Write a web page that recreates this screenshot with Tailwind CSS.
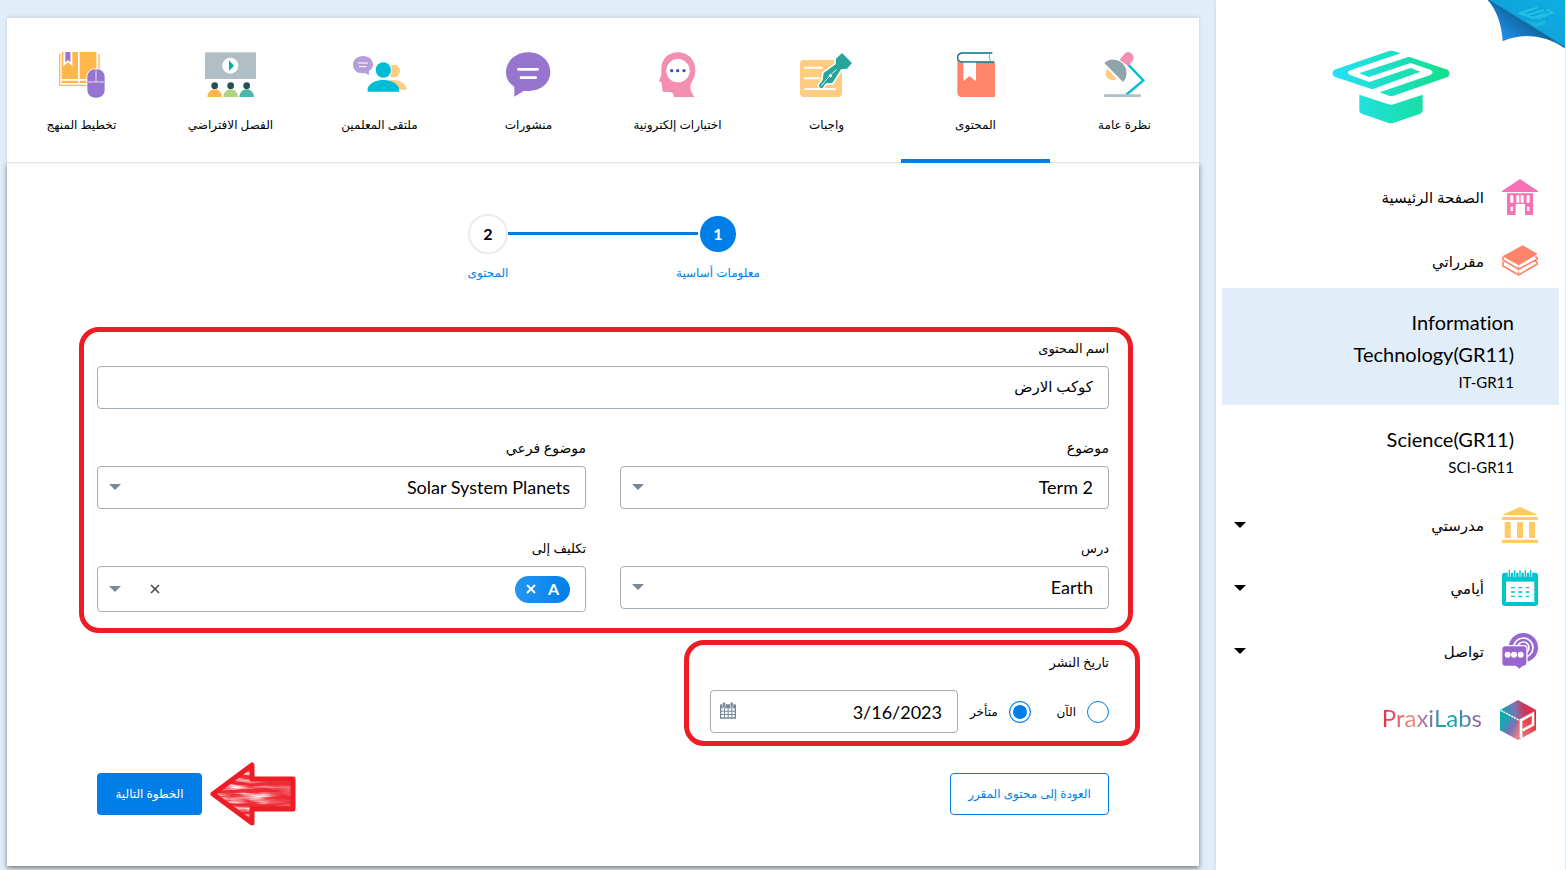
<!DOCTYPE html>
<html lang="ar" dir="rtl">
<head>
<meta charset="utf-8">
<meta name="viewport" content="width=device-width, initial-scale=1">
<title>المحتوى</title>
<script src="https://cdn.jsdelivr.net/npm/@tailwindcss/browser@4"></script>
</head>
<body class="flex min-h-screen bg-[#e1edf9] font-[Lato,'DejaVu_Sans',sans-serif] text-black [font-variant-ligatures:no-common-ligatures]">

<aside class="relative w-[350px] shrink-0 border-r border-[#e1edf9] bg-white px-1.5 shadow-[0_0_4px_rgba(0,0,0,0.12)]">
  <a href="#" aria-label="الشعار" class="mt-[50px] flex justify-center">
    <svg class="h-[74px] w-[118px]" viewBox="365 150 354 222">
      <defs><linearGradient id="cap" x1="365" x2="719" y1="0" y2="0" gradientUnits="userSpaceOnUse"><stop stop-color="#26e0f8"/><stop offset="1" stop-color="#12df8a"/></linearGradient></defs>
      <g fill="url(#cap)">
        <path d="M372 209 536 153Q543 151 550 153L571 160 420 211Q406 217 419 225L477 246 601 204 630 215 486 268 372 230Q361 220 372 209Z"/>
        <path d="M712 209 596 170 446 220 476 231 601 189 660 209Q674 217 660 225L508 277 536 287Q543 289 550 287L712 231Q724 220 712 209Z"/>
        <path d="M447 284 532 312Q542 316 552 312L637 284V332Q636 338 630 341L551 368Q542 371 533 368L454 341Q448 338 447 332Z"/>
      </g>
    </svg>
  </a>
  <a href="#" aria-label="طي الصفحة" class="absolute top-0 right-0">
    <svg class="h-12 w-[77px]" viewBox="836 0 231 144">
      <defs>
        <linearGradient id="f1" x1="0" y1="1" x2="1" y2="0"><stop stop-color="#0e6fb6"/><stop offset=".5" stop-color="#10a3dc"/><stop offset="1" stop-color="#0cb0e0"/></linearGradient>
        <linearGradient id="f2" x1="870" y1="120" x2="935" y2="40" gradientUnits="userSpaceOnUse"><stop stop-color="#2196f3"/><stop offset=".6" stop-color="#1577bd"/><stop offset="1" stop-color="#0f639f"/></linearGradient>
      </defs>
      <path d="M836 0H1067V143Z" fill="url(#f1)"/>
      <path d="M836 0Q876 50 880 124 970 84 1067 143Z" fill="url(#f2)"/>
      <path d="M836 0 1067 143" stroke="#0a5384" stroke-width="5" opacity=".6"/>
      <g fill="none" stroke="#2cc8ea" stroke-width="6" opacity=".8"><path d="M985 22 932 40 972 54 1008 40"/><path d="M1012 28 1030 38 984 56M1004 30 952 46"/></g>
      <path d="M950 60 980 70 1008 60V74L980 82Z" fill="#19b9d8"/>
    </svg>
  </a>

  <nav class="pt-[55px] text-[15px]">
    <a href="#" class="flex h-9 items-center gap-[18px] pr-[21px]">
      <svg class="size-9" viewBox="876 537 108 108"><path fill="#f971b5" d="M930 537 984 573V576H876V573ZM891 580H969V645H945V612H917V645H891Z"/><g fill="#fff"><path d="M901 586h9v22h-9zM919 586h9v22h-9zM932 586h9v22h-9zM950 586h9v22h-9zM902 620h7v13h-7zM951 620h7v13h-7z"/></g></svg>
      <span>الصفحة الرئيسية</span>
    </a>
    <a href="#" class="mt-7 flex h-9 items-center gap-[18px] pr-[21px]">
      <svg class="size-9" viewBox="876 730 108 108"><path fill="#ff8469" d="M938 737 983 763 926 797 877 770Z"/><g fill="none" stroke="#ff8469" stroke-width="5" stroke-linejoin="round"><path d="M879 771V781L926 809 983 777 976 770M976 782 983 792 926 826 879 799V786"/><path d="M926 800V808M926 816V825" stroke-width="3"/></g></svg>
      <span>مقرراتي</span>
    </a>
    <div class="mt-[9px] text-right" dir="ltr">
      <a href="#" aria-current="page" class="block bg-[#e1edf9] pt-[18px] pr-[45px] pb-[11px] pl-20"><span class="block text-xl leading-8">Information Technology(GR11)</span><span class="block text-[15px] leading-6">IT-GR11</span></a>
      <a href="#" class="block pt-[18px] pr-[45px] pb-[11px] pl-20"><span class="block text-xl leading-8">Science(GR11)</span><span class="block text-[15px] leading-6">SCI-GR11</span></a>
    </div>
    <button type="button" class="mt-[17px] flex h-9 w-full items-center gap-[18px] pr-[21px] pl-3">
      <svg class="size-9" viewBox="876 681 108 108"><path fill="#ffca62" d="M930 681 980 703V706H880V703ZM876 711H984V720H876ZM884 726H902V774H884ZM921 726H939V774H921ZM957 726H975V774H957ZM876 779H984V789H876Z"/></svg>
      <span>مدرستي</span>
      <svg class="mr-auto h-1.5 w-3" viewBox="0 0 12 6"><path d="M0 0H12L6 6Z"/></svg>
    </button>
    <button type="button" class="mt-[27px] flex h-9 w-full items-center gap-[18px] pr-[21px] pl-3">
      <svg class="size-9" viewBox="876 60 108 108"><rect x="876" y="68" width="108" height="100" rx="8" fill="#00c5ce"/><rect x="888" y="95" width="85" height="61" fill="#fff"/><path d="M898 60V80M914 60V80M930 60V80M946 60V80M962 60V80" stroke="#fff" stroke-width="9"/><path d="M898 61V81M914 61V81M930 61V81M946 61V81M962 61V81" stroke="#00c5ce" stroke-width="4" stroke-linecap="round"/><path d="M903 113H958M903 126H958M903 139H958" stroke="#00c5ce" stroke-width="4" stroke-dasharray="12 10"/></svg>
      <span>أيامي</span>
      <svg class="mr-auto h-1.5 w-3" viewBox="0 0 12 6"><path d="M0 0H12L6 6Z"/></svg>
    </button>
    <button type="button" class="mt-[27px] flex h-9 w-full items-center gap-[18px] pr-[21px] pl-3">
      <svg class="size-9" viewBox="876 249 108 108"><circle cx="940" cy="293" r="44" fill="#9966d1"/><g fill="none" stroke="#fff" stroke-width="5"><circle cx="940" cy="293" r="29"/><circle cx="940" cy="293" r="17"/></g><path d="M886 287H941Q951 287 951 297V339Q951 349 941 349H939L928 359 917 349H886Q875 349 875 339V297Q875 287 886 287Z" fill="#9966d1" stroke="#fff" stroke-width="4"/><g fill="#fff"><circle cx="893" cy="314" r="9"/><circle cx="912" cy="314" r="9"/><circle cx="932" cy="314" r="9"/></g></svg>
      <span>تواصل</span>
      <svg class="mr-auto h-1.5 w-3" viewBox="0 0 12 6"><path d="M0 0H12L6 6Z"/></svg>
    </button>
    <a href="#" class="mt-[31px] flex h-10 items-start gap-[18px] pr-[23px]">
      <svg class="h-10 w-9" viewBox="870 450 108 120">
        <defs><linearGradient id="p1" x1="0" x2="1" y1=".4" y2=".3"><stop stop-color="#00afa9"/><stop offset=".4" stop-color="#7a74b5"/><stop offset=".65" stop-color="#c83a5e"/><stop offset="1" stop-color="#ee2b38"/></linearGradient><linearGradient id="p2" x1="0" y1="0" x2=".9" y2="1"><stop stop-color="#00b3a6"/><stop offset=".35" stop-color="#1fa3b4"/><stop offset=".65" stop-color="#7c70b2"/><stop offset="1" stop-color="#df8697"/></linearGradient><linearGradient id="p3" x1="0" y1="1" x2=".8" y2="0"><stop stop-color="#e88c8c"/><stop offset=".5" stop-color="#e6545b"/><stop offset="1" stop-color="#e4202e"/></linearGradient></defs>
        <path d="M924 450 978 480 924 511 870 480Z" fill="url(#p1)"/><path d="M870 480 924 511V570L870 541Z" fill="url(#p2)"/><path d="M978 480 924 511V570L978 541Z" fill="url(#p3)"/>
        <path d="M872 481 928 511" stroke="#fff" stroke-width="4" stroke-dasharray="7 2"/><path d="M933 564V511L969 491V524L938 541" fill="none" stroke="#fff" stroke-width="8"/>
      </svg>
      <span class="bg-[linear-gradient(90deg,#e4304a,#e88c8c_32%,#8b6db0_46%,#00afa9_64%,#4a86bd_84%,#b05a8c)] bg-clip-text pt-0.5 text-2xl leading-8 text-transparent" dir="ltr">PraxiLabs</span>
    </a>
  </nav>
</aside>

<main class="min-w-0 flex-1 pt-[18px] pr-[17px] pb-1 pl-[7px]">
  <nav class="relative z-10 grid grid-cols-8 border-b border-[#dfe1e3] bg-white text-center text-[12px] leading-6 shadow-[0_-1px_4px_rgba(0,0,0,0.12)]">
    <a href="#" class="-mb-px flex flex-col items-center border-b-4 border-transparent pt-[34px] pb-[22px]">
      <svg class="h-[46px] w-[54px]" viewBox="1014 156 162 138"><path d="M1104 193 1150 241 1098 285" fill="none" stroke="#00bcd4" stroke-width="7"/><path d="M1036 287H1139" stroke="#b0bec5" stroke-width="8" stroke-linecap="round"/><path d="M1079 180 1093 162Q1102 152 1113 159 1125 168 1119 180L1105 198Z" fill="#f48fb1"/><path d="M1042 206A21 21 0 0 0 1070 237Z" fill="#ffcc80"/><path d="M1033 189A40 40 0 0 1 1089 246Z" fill="#90a4ae"/></svg>
      <span class="mt-[15px]">نظرة عامة</span>
    </a>
    <a href="#" aria-current="page" class="-mb-px flex flex-col items-center border-b-4 border-[#007ee8] pt-[34px] pb-[22px]">
      <svg class="h-[46px] w-[54px]" viewBox="567 156 162 138"><path d="M592 173Q592 185 602 187H705V291H604Q592 290 592 277Z" fill="#ff8469"/><path d="M697 159H606Q593 161 593 173 593 184 606 186H703" fill="#fff" stroke="#00738c" stroke-width="4"/><path d="M690 160Q684 172 692 184" fill="none" stroke="#4db6ac" stroke-width="3"/><path d="M610 188H648V244L628 228 610 244Z" fill="#fff"/></svg>
      <span class="mt-[15px]">المحتوى</span>
    </a>
    <a href="#" class="-mb-px flex flex-col items-center border-b-4 border-transparent pt-[34px] pb-[22px]">
      <svg class="h-[46px] w-[54px]" viewBox="120 156 162 138"><rect x="120" y="180" width="126" height="111" rx="11" fill="#ffcc80"/><path d="M135 203H185M135 235H178M135 267H225" stroke="#fff" stroke-width="6" stroke-linecap="round"/><path d="M246 159 276 189 261 206 243 208 217 249 198 250 186 264 177 257 188 240 191 219 227 193 228 176Z" fill="#26a69a" stroke="#fff" stroke-width="10" paint-order="stroke" stroke-linejoin="round"/><circle cx="184" cy="257" r="7" fill="#26a69a"/><path d="M184 257 211 226 229 209" stroke="#fff" stroke-width="3"/><circle cx="211" cy="227" r="5" fill="#fff"/></svg>
      <span class="mt-[15px]">واجبات</span>
    </a>
    <a href="#" class="-mb-px flex flex-col items-center border-b-4 border-transparent pt-[34px] pb-[22px]">
      <svg class="h-[46px] w-[54px]" viewBox="603 66 162 138"><path d="M634 120C632 88 654 67 685 67 716 67 736 92 736 121 736 150 722 152 721 171 721 184 729 193 733 201H672C672 190 665 185 657 186H643Q636 186 637 178L635 160Q635 157 628 154 626 150 631 143 636 135 634 120Z" fill="#f48fb1"/><circle cx="684" cy="122" r="35" fill="#fff"/><g fill="#3f51b5"><circle cx="665" cy="122" r="5"/><circle cx="683" cy="122" r="5"/><circle cx="702" cy="122" r="5"/></g></svg>
      <span class="mt-[15px]">اختبارات إلكترونية</span>
    </a>
    <a href="#" class="-mb-px flex flex-col items-center border-b-4 border-transparent pt-[34px] pb-[22px]">
      <svg class="h-[46px] w-[54px]" viewBox="156 66 162 138"><path d="M235 67C272 67 301 93 301 126 301 160 270 188 222 182L193 200V170C177 161 168 145 168 126 168 93 198 67 235 67Z" fill="#9575cd"/><path d="M205 118H263M213 143H257" stroke="#fff" stroke-width="8" stroke-linecap="round"/></svg>
      <span class="mt-[15px]">منشورات</span>
    </a>
    <a href="#" class="-mb-px flex flex-col items-center border-b-4 border-transparent pt-[34px] pb-[22px]">
      <svg class="h-[46px] w-[54px]" viewBox="1059 156 162 138"><circle cx="1181" cy="213" r="19" fill="#ffcc80"/><path d="M1168 240C1200 238 1218 250 1220 269H1200Z" fill="#ffcc80"/><circle cx="1150" cy="210" r="26" fill="#fff"/><circle cx="1150" cy="210" r="23" fill="#00bcd4"/><path d="M1103 275V264C1118 232 1182 232 1197 264V275Z" fill="#00bcd4"/><path d="M1089 168C1108 168 1119 180 1119 194 1119 203 1114 208 1107 213V225L1094 219C1074 222 1059 211 1059 194 1059 179 1072 168 1089 168Z" fill="#b39ddb"/><path d="M1074 189H1104M1077 200H1099" stroke="#fff" stroke-width="3"/></svg>
      <span class="mt-[15px]">ملتقى المعلمين</span>
    </a>
    <a href="#" class="-mb-px flex flex-col items-center border-b-4 border-transparent pt-[34px] pb-[22px]">
      <svg class="h-[46px] w-[54px]" viewBox="612 156 162 138"><rect x="615" y="157" width="153" height="80" fill="#b0bec5"/><circle cx="691" cy="197" r="24" fill="#fff"/><path d="M687 181 702 197 687 213Z" fill="#00b39d"/><path d="M622 291C624 260 664 260 666 291Z" fill="#ffb74d"/><path d="M670 291C672 260 712 260 714 291Z" fill="#aed581"/><path d="M718 291C720 260 760 260 762 291Z" fill="#4db6ac"/><g fill="#264f5c"><circle cx="644" cy="257" r="10"/><circle cx="692" cy="257" r="10"/><circle cx="740" cy="257" r="10"/></g></svg>
      <span class="mt-[15px]">الفصل الافتراضي</span>
    </a>
    <a href="#" class="-mb-px flex flex-col items-center border-b-4 border-transparent pt-[34px] pb-[22px]">
      <svg class="h-[46px] w-[54px]" viewBox="165 156 162 138"><path d="M179 162V256H262M297 162V210" fill="none" stroke="#ffb74d" stroke-width="4"/><path d="M185 156H234V237H185ZM239 156H289V237H239ZM185 242H234V249H185ZM239 242H262V249H239Z" fill="#ffb74d"/><path d="M190 155H217V199L204 186 190 199Z" fill="#fff"/><path d="M196 155H211V187L204 180 196 187Z" fill="#9575cd"/><rect x="262" y="208" width="52" height="85" rx="22" fill="#9575cd" stroke="#fff" stroke-width="5" paint-order="stroke"/><path d="M288 208V246M262 246H314" stroke="#e4dcf3" stroke-width="3"/></svg>
      <span class="mt-[15px]">تخطيط المنهج</span>
    </a>
  </nav>

  <form class="bg-white pt-[51px] pb-[51px] shadow-[0_2px_5px_rgba(0,0,0,0.5)]">
    <ol class="flex justify-center text-[12px] leading-6 text-[#007ee8]">
      <li class="flex w-10 flex-col items-center whitespace-nowrap">
        <span class="flex h-10 items-center"><span class="flex size-9 items-center justify-center rounded-full bg-[#007ee8] text-base font-bold text-white">1</span></span>
        <span class="mt-[7px]">معلومات أساسية</span>
      </li>
      <li aria-hidden="true" class="mt-[18px] h-[3px] w-[190px] bg-[#007ee8]"></li>
      <li class="flex w-10 flex-col items-center whitespace-nowrap">
        <span class="flex size-10 items-center justify-center rounded-full border-2 border-[#ebebeb] text-base font-bold text-black">2</span>
        <span class="mt-[7px]">المحتوى</span>
      </li>
    </ol>

    <section class="mt-[42px] mr-[66px] ml-[72px] grid grid-cols-2 gap-x-[34px] gap-y-7 rounded-[20px] border-[5px] border-[#ee1c25] pt-1 pr-[19px] pb-4 pl-[13px] text-[13px]">
      <div class="col-span-2">
        <label for="name" class="mb-1.5 block leading-6">اسم المحتوى</label>
        <input id="name" type="text" value="كوكب الارض" class="block h-[43px] w-full rounded border border-[#a3adb5] px-[15px] pb-0.5 text-[15px]">
      </div>
      <div class="-mt-px">
        <label for="topic" class="mb-1.5 block text-sm leading-6">موضوع</label>
        <div class="relative">
          <select id="topic" class="block h-[43px] w-full appearance-none rounded border border-[#a3adb5] bg-white px-[15px] pb-0.5 text-lg"><option>Term 2</option></select>
          <svg class="pointer-events-none absolute top-[18px] left-3 h-1.5 w-3" viewBox="0 0 12 6"><path d="M0 0H12L6 6Z" fill="#788896"/></svg>
        </div>
      </div>
      <div class="-mt-px">
        <label for="sub" class="mb-1.5 block text-sm leading-6">موضوع فرعي</label>
        <div class="relative">
          <select id="sub" class="block h-[43px] w-full appearance-none rounded border border-[#a3adb5] bg-white px-[15px] pb-0.5 text-lg"><option>Solar System Planets</option></select>
          <svg class="pointer-events-none absolute top-[18px] left-3 h-1.5 w-3" viewBox="0 0 12 6"><path d="M0 0H12L6 6Z" fill="#788896"/></svg>
        </div>
      </div>
      <div class="-mt-px">
        <label for="lesson" class="mb-1.5 block leading-6">درس</label>
        <div class="relative">
          <select id="lesson" class="block h-[43px] w-full appearance-none rounded border border-[#a3adb5] bg-white px-[15px] pb-0.5 text-lg"><option>Earth</option></select>
          <svg class="pointer-events-none absolute top-[18px] left-3 h-1.5 w-3" viewBox="0 0 12 6"><path d="M0 0H12L6 6Z" fill="#788896"/></svg>
        </div>
      </div>
      <div class="-mt-px">
        <span id="assign" class="mb-1.5 block leading-6">تكليف إلى</span>
        <div role="group" aria-labelledby="assign" class="flex h-[46px] items-center rounded border border-[#a3adb5] pr-[15px] pl-[11px]">
          <span class="flex h-[27px] items-center gap-3 rounded-full bg-linear-to-l from-[#007ee8] to-[#2196f3] px-[11px] text-base font-bold text-white">A<button type="button" aria-label="إزالة A"><svg class="size-2.5" viewBox="0 0 10 10"><path d="M1 1 9 9M9 1 1 9" stroke="#fff" stroke-width="2"/></svg></button></span>
          <button type="button" aria-label="مسح الكل" class="mr-auto ml-[29px]"><svg class="size-2.5" viewBox="0 0 10 10"><path d="M1 1 9 9M9 1 1 9" stroke="#444" stroke-width="1.5"/></svg></button>
          <button type="button" aria-label="فتح القائمة"><svg class="h-1.5 w-3" viewBox="0 0 12 6"><path d="M0 0H12L6 6Z" fill="#788896"/></svg></button>
        </div>
      </div>
    </section>

    <section class="mt-[7px] mr-[59px] w-[456px] rounded-[20px] border-[5px] border-[#ee1c25] pt-[5px] pr-[26px] pb-2 pl-[21px]">
      <h2 class="text-[13px] leading-6">تاريخ النشر</h2>
      <div class="mt-4 flex items-center text-[12px]">
        <input id="now" name="when" type="radio" class="size-[22px] shrink-0 appearance-none rounded-full border border-[#007ee8]">
        <label for="now" class="mr-[11px]">الآن</label>
        <input id="later" name="when" type="radio" checked class="mr-auto size-[22px] shrink-0 appearance-none rounded-full border border-[#007ee8] bg-[#007ee8] shadow-[inset_0_0_0_3px_white]">
        <label for="later" class="mr-[11px]">متأخر</label>
        <div class="relative mr-3 w-[248px]">
          <input type="text" aria-label="تاريخ النشر" value="3/16/2023" dir="ltr" class="block h-[43px] w-full rounded border border-[#a3adb5] pr-[15px] pl-10 text-right text-lg">
          <svg class="pointer-events-none absolute top-3 left-2.5 h-[17px] w-4" viewBox="0 0 48 51"><path d="M3 7H45Q48 7 48 10V50H0V10Q0 7 3 7Z" fill="#788896"/><path d="M4 19H12V26H4ZM15 19H23V26H15ZM26 19H34V26H26ZM37 19H44V26H37ZM4 29H12V36H4ZM15 29H23V36H15ZM26 29H34V36H26ZM37 29H44V36H37ZM4 39H12V46H4ZM15 39H23V46H15ZM26 39H34V46H26ZM37 39H44V46H37Z" fill="#fff"/><path d="M12 4V12M35 4V12" stroke="#fff" stroke-width="10" stroke-linecap="round"/><path d="M12 4V12M35 4V12" stroke="#788896" stroke-width="7" stroke-linecap="round"/></svg>
        </div>
      </div>
    </section>

    <div class="mt-[27px] flex items-center pr-[90px] pl-[90px] text-[12px]">
      <button type="button" class="h-[42px] w-[159px] rounded border border-[#007ee8] whitespace-nowrap text-[#007ee8]">العودة إلى محتوى المقرر</button>
      <svg class="-my-3 mr-auto ml-2 h-[66px] w-[86px]" viewBox="0 0 86 66">
        <defs>
          <clipPath id="arrow"><path d="M3 33 42 4V18H83V48H42V62Z"/></clipPath>
          <filter id="scratch" x="0" y="0" width="1" height="1"><feTurbulence type="fractalNoise" baseFrequency="0.03 0.28" numOctaves="3" seed="4"/><feColorMatrix values="0 0 0 0 1  0 0 0 0 1  0 0 0 0 1  2.6 0 0 0 -1.05"/></filter>
          <linearGradient id="fade"><stop stop-color="#fff"/><stop offset=".55" stop-color="#fff"/><stop offset=".8" stop-color="#555"/></linearGradient>
          <mask id="fadeMask"><rect width="86" height="66" fill="url(#fade)"/></mask>
        </defs>
        <path d="M3 33 42 4V18H83V48H42V62Z" fill="#ee2b34"/>
        <g clip-path="url(#arrow)"><g mask="url(#fadeMask)"><rect width="86" height="66" filter="url(#scratch)"/></g></g>
        <path d="M3 33 42 4V18H83V48H42V62Z" fill="none" stroke="#ee1c25" stroke-width="5" stroke-linejoin="round"/>
      </svg>
      <button type="submit" class="h-[42px] w-[105px] rounded bg-[#007ee8] whitespace-nowrap text-white">الخطوة التالية</button>
    </div>
  </form>
</main>
</body>
</html>
